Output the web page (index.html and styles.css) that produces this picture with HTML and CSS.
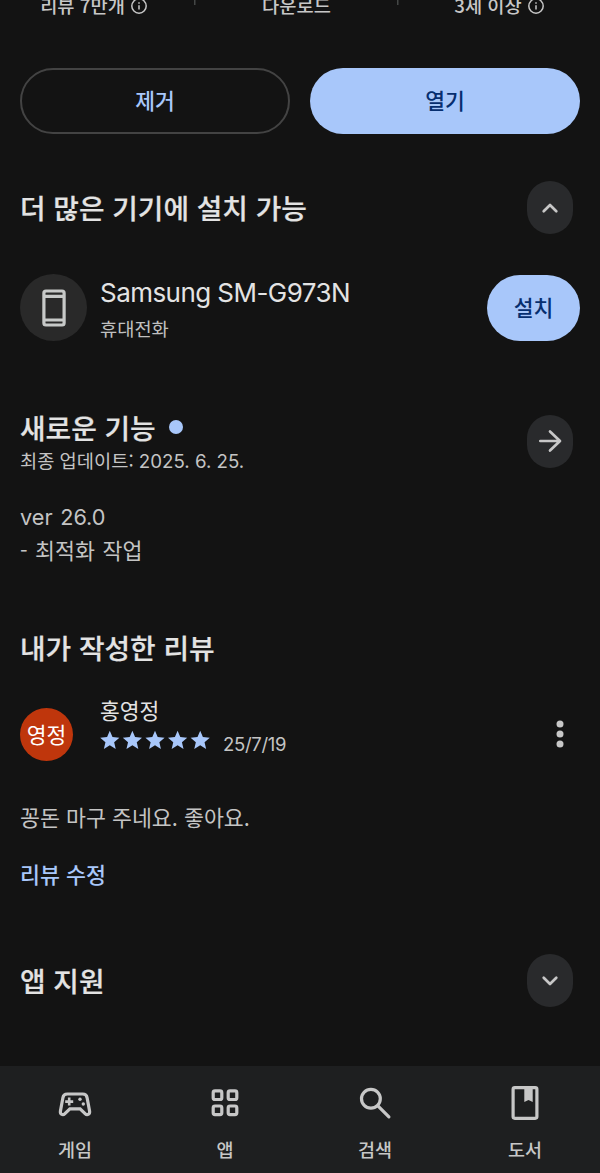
FILE: index.html
```html
<!DOCTYPE html>
<html lang="ko">
<head>
<meta charset="utf-8">
<title>앱 정보</title>
<link rel="stylesheet" href="styles.css">
</head>
<body>
<div class="screen">
  <main class="content">
    <div class="stats">
      <div class="stat"><span>리뷰 7만개</span><svg class="info" viewBox="0 0 16 16"><circle cx="8" cy="8" r="7.2"/><path d="M8 7.2v4.3M8 4.2v1.6"/></svg></div>
      <div class="stat"><span>다운로드</span></div>
      <div class="stat"><span>3세 이상</span><svg class="info" viewBox="0 0 16 16"><circle cx="8" cy="8" r="7.2"/><path d="M8 7.2v4.3M8 4.2v1.6"/></svg></div>
    </div>

    <div class="actions">
      <button class="btn outline">제거</button>
      <button class="btn filled">열기</button>
    </div>

    <section class="row devices-head">
      <h2 class="title">더 많은 기기에 설치 가능</h2>
      <button class="round"><svg viewBox="0 0 46 54"><path d="M16.700 30.300 23 24l6.300 6.300"/></svg></button>
    </section>

    <section class="device">
      <div class="device-icon"><svg viewBox="0 0 24 38"><rect x="1.900" y="2" width="20.200" height="34" rx="2"/><path d="M2 7.300h20M2 31h20"/></svg></div>
      <div class="device-text">
        <div class="device-name">Samsung SM-G973N</div>
        <div class="device-type">휴대전화</div>
      </div>
      <button class="btn filled install">설치</button>
    </section>

    <section class="row news-head">
      <div>
        <h2 class="title">새로운 기능<span class="dot"></span></h2>
        <p class="updated">최종 업데이트: <span class="num">2025. 6. 25.</span></p>
      </div>
      <button class="round"><svg viewBox="0 0 46 54"><path d="M13.300 27h19.500M23 17.500l10 9.500-10 9.500"/></svg></button>
    </section>
    <p class="news"><span class="ver">ver 26.0</span><br>- 최적화 작업</p>

    <h2 class="title review-title">내가 작성한 리뷰</h2>
    <section class="review-head">
      <div class="avatar">영정</div>
      <div class="reviewer">
        <div class="name">홍영정</div>
        <div class="rating">
          <svg class="stars" viewBox="0 0 112 20">
            <defs><path id="star" transform="scale(.96)" d="M10 15.270 16.180 19l-1.640-7.030L20 7.240l-7.190-.61L10 0 7.190 6.630 0 7.240l5.460 4.730L3.820 19z"/></defs>
            <use href="#star" x=".200" y=".700"/><use href="#star" x="22.800" y=".700"/><use href="#star" x="45.400" y=".700"/><use href="#star" x="68" y=".700"/><use href="#star" x="90.600" y=".700"/>
          </svg>
          <span class="date">25/7/19</span>
        </div>
      </div>
      <svg class="more" viewBox="0 0 8 28"><circle cx="4" cy="4" r="3.500"/><circle cx="4" cy="14" r="3.500"/><circle cx="4" cy="24" r="3.500"/></svg>
    </section>
    <p class="review">꽁돈 마구 주네요. 좋아요.</p>
    <a class="edit">리뷰 수정</a>

    <section class="row support">
      <h2 class="title">앱 지원</h2>
      <button class="round"><svg viewBox="0 0 46 54"><path d="M16.700 23.700 23 30l6.300-6.300"/></svg></button>
    </section>
  </main>

  <nav class="nav">
    <a class="tab"><svg viewBox="0 0 40 40"><path class="line" d="M12.300 11h15.400c2.400 0 4 1.300 4.400 3.700l2.500 13.600c.4 3.200-2.500 4.300-4.500 2.300l-5-4.800h-10.200l-5 4.800c-2 2-4.900.9-4.500-2.300l2.500-13.600c.4-2.400 2-3.700 4.400-3.700z"/><path class="plus" d="M14.200 14.600v8M10.200 18.600h8"/><circle cx="25" cy="16.200" r="1.700"/><circle cx="28.300" cy="21" r="1.700"/></svg><span>게임</span></a>
    <a class="tab"><svg viewBox="0 0 40 40"><g class="line"><rect x="8.200" y="7.900" width="8.600" height="8.600" rx="1.800"/><rect x="23.200" y="7.900" width="8.600" height="8.600" rx="1.800"/><rect x="8.200" y="23" width="8.600" height="8.600" rx="1.800"/><rect x="23.200" y="23" width="8.600" height="8.600" rx="1.800"/></g></svg><span>앱</span></a>
    <a class="tab"><svg viewBox="0 0 40 40"><g class="line"><circle cx="15.900" cy="15.800" r="9.400"/><path d="m22.900 22.800 11 11"/></g></svg><span>검색</span></a>
    <a class="tab"><svg viewBox="0 0 40 40"><rect class="line" x="8.100" y="4.700" width="23.800" height="30.600" rx="1.700"/><path d="M19.300 5h8.400v14l-4.200-2.100-4.200 2.100z"/></svg><span>도서</span></a>
  </nav>
</div>
</body>
</html>
```
FILE: styles.css
```css
* { box-sizing: border-box; }

body {
  margin: 0;
  background: #131313;
  color: #e3e3e3;
  font-family: "Noto Sans CJK KR", sans-serif;
}

h2, p { margin: 0; }

svg { display: block; flex: none; }

button {
  display: flex;
  align-items: center;
  justify-content: center;
  padding: 0;
  border: 0;
  font: inherit;
}

.screen {
  display: flex;
  flex-direction: column;
  width: 600px;
  height: 1173px;
  overflow: hidden;
}

.content {
  flex: 1;
  padding: 0 20px;
}

.stats {
  display: grid;
  grid-template-columns: 195px 203px 202px;
  height: 24px;
  margin: -7px -20px 0;
  background:
    linear-gradient(#444746, #444746) 194px 0 / 1.500px 12px no-repeat,
    linear-gradient(#444746, #444746) 397px 0 / 1.500px 12px no-repeat;
}

.stat {
  display: flex;
  align-items: center;
  justify-content: center;
  gap: 6px;
  color: #c7c7c7;
  font-size: 18.700px;
  font-weight: 500;
  line-height: 24px;
}

.stat:first-child { padding-right: 8px; }

.info {
  width: 16px;
  height: 16px;
  margin-top: 2px;
  fill: none;
  stroke: #c7c7c7;
  stroke-width: 1.500;
}

.actions {
  display: grid;
  grid-template-columns: 1fr 1fr;
  gap: 20px;
  margin-top: 51px;
}

.btn {
  height: 66px;
  padding-bottom: 3px;
  border-radius: 33px;
  font-size: 21.500px;
  font-weight: 500;
}

.outline {
  border: 2px solid #434343;
  background: transparent;
  color: #a8c7fa;
}

.filled {
  background: #a8c7fa;
  color: #062e6f;
}

.row {
  display: flex;
  align-items: center;
  justify-content: space-between;
  padding-right: 7px;
}

.title {
  display: flex;
  align-items: center;
  font-size: 27.800px;
  font-weight: 500;
  line-height: 40px;
  -webkit-text-stroke: .2px currentColor;
}

.round {
  width: 46px;
  height: 53px;
  border-radius: 23px;
  background: #292a2c;
}

.round svg {
  width: 46px;
  height: 54px;
  fill: none;
  stroke: #c7c7c7;
  stroke-width: 2.700;
  stroke-linecap: round;
  stroke-linejoin: round;
}

.devices-head { margin-top: 47px; }

.devices-head .title,
.support .title { padding-bottom: 2px; }

.device {
  display: flex;
  align-items: center;
  margin-top: 40px;
}

.device-icon {
  display: flex;
  align-items: center;
  justify-content: center;
  width: 67px;
  height: 67px;
  border-radius: 50%;
  background: #292929;
}

.device-icon svg {
  width: 24px;
  height: 38px;
  fill: none;
  stroke: #c7c9c8;
  stroke-width: 3.200;
}

.device-text {
  flex: 1;
  height: 67px;
  padding: 2px 0 0 13px;
}

.device-name {
  font-family: Inter, sans-serif;
  font-size: 26px;
  letter-spacing: -.550px;
  line-height: 34px;
}

.device-type {
  margin-top: 1px;
  color: #c0c0c0;
  font-size: 18.700px;
  line-height: 34px;
}

.install {
  width: 93px;
  padding-bottom: 2px;
}

.news-head { margin-top: 66px; }

.dot {
  width: 14px;
  height: 14px;
  margin-left: 13px;
  border-radius: 50%;
  background: #a8c7fa;
}

.updated {
  color: #c4c4c4;
  font-size: 18.700px;
  line-height: 26px;
}

.num, .ver, .date { font-family: Inter, sans-serif; }

.news {
  margin-top: 25px;
  color: #c4c4c4;
  font-size: 21.700px;
  line-height: 32.500px;
  word-spacing: 1.500px;
}

.review-title { margin-top: 61px; }

.review-head {
  display: flex;
  align-items: flex-start;
  height: 62px;
  margin-top: 32px;
  padding-right: 16px;
}

.avatar {
  width: 53px;
  height: 53px;
  margin-top: 9px;
  border-radius: 50%;
  background: #bf360c;
  color: #fff;
  font-size: 21.500px;
  line-height: 51px;
  text-align: center;
}

.reviewer {
  flex: 1;
  margin-top: -4px;
  padding-left: 27px;
}

.name {
  font-size: 21.500px;
  line-height: 30px;
}

.rating {
  display: flex;
  height: 32px;
  margin-top: 2px;
  gap: 11px;
}

.stars {
  width: 112px;
  height: 20px;
  margin-top: 3px;
  fill: #a8c7fa;
}

.date {
  color: #c4c4c4;
  font-size: 18.500px;
  letter-spacing: -.300px;
  line-height: 34px;
}

.more {
  width: 8px;
  height: 28px;
  margin-top: 21px;
  fill: #c7c7c7;
}

.review {
  margin-top: 41px;
  color: #c4c4c4;
  font-size: 21.700px;
  line-height: 30px;
}

.edit {
  display: block;
  margin-top: 27px;
  color: #a8c7fa;
  font-size: 21.700px;
  font-weight: 500;
  line-height: 30px;
}

.support { margin-top: 65px; }

.nav {
  display: grid;
  grid-template-columns: repeat(4, 1fr);
  height: 107px;
  background: #1e1f20;
}

.tab {
  display: flex;
  flex-direction: column;
  align-items: center;
  padding-top: 17px;
  color: #c7c7c7;
  font-size: 18.500px;
  font-weight: 500;
  line-height: 26px;
}

.tab svg {
  width: 40px;
  height: 40px;
  margin-bottom: 13px;
  fill: #c7c7c7;
}

.tab .line {
  fill: none;
  stroke: #c7c7c7;
  stroke-width: 3.200;
  stroke-linecap: round;
}

.tab .plus {
  stroke: #c7c7c7;
  stroke-width: 2.600;
}
```
